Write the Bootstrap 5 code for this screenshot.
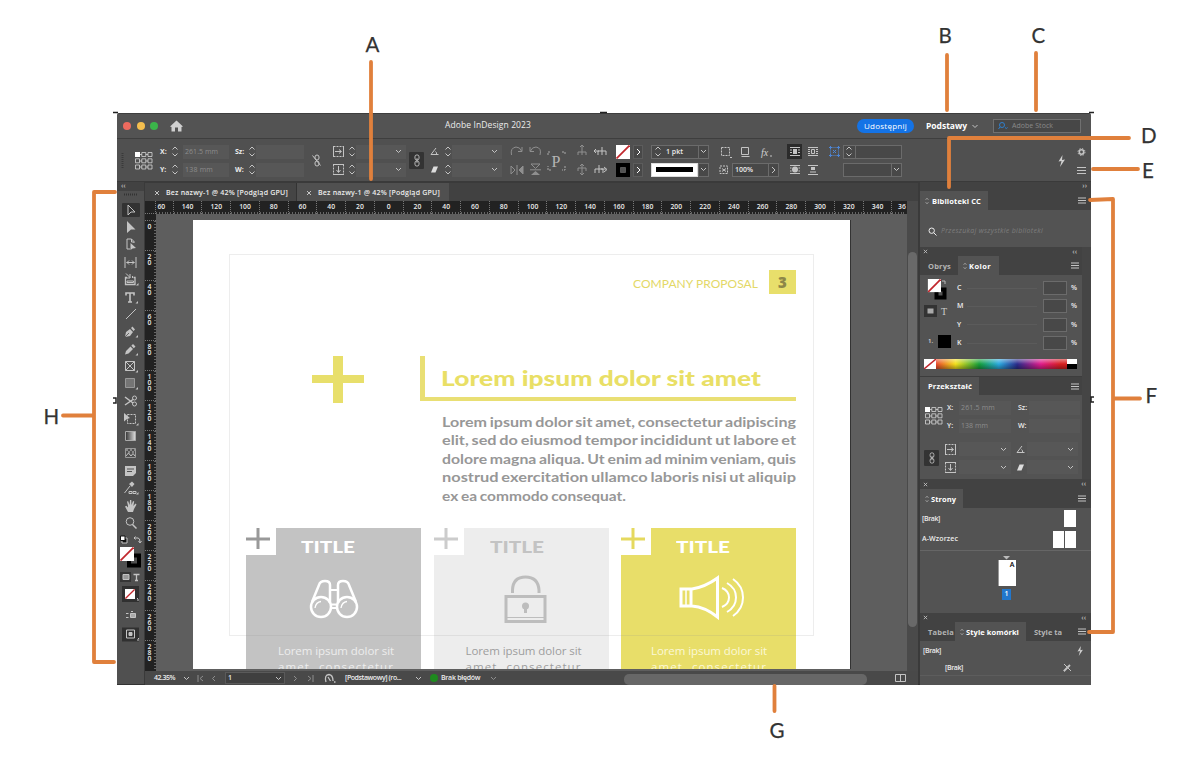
<!DOCTYPE html>
<html lang="pl">
<head>
<meta charset="utf-8">
<meta name="viewport" content="width=device-width, initial-scale=1">
<title>Adobe InDesign 2023</title>
<link href="https://cdn.jsdelivr.net/npm/bootstrap@5.3.0/dist/css/bootstrap.min.css" rel="stylesheet">
<style>
body{width:1200px;height:760px;overflow:hidden;background:#fff;position:relative;font-family:"Open Sans","Noto Sans",sans-serif}
svg{display:block;flex:none}
.ic{fill:none;stroke:#c4c4c4;stroke-width:1}
.ic .f{fill:#c4c4c4;stroke:none}
.dim{stroke:#8f8f8f}
.dim .f{fill:#8f8f8f}
.appwin{width:974px;height:572px;margin:113px 0 0 117px;background:#535353;color:#ececec;font-size:7px;line-height:10px;font-weight:600;border-top:1px solid #3e3e3e;border-radius:2px 2px 0 0;overflow:hidden;box-shadow:inset 0 -1px #333}
[data-w],[data-s]{display:inline-block;white-space:nowrap;flex:none;transform-origin:0 50%}
/* title bar */
.titlebar{display:grid;grid-template-columns:49px 279px 412px 69px 67px 98px;height:25px;align-items:center;border-bottom:1px solid #3e3e3e}
.dot{width:8px;height:8px;border-radius:50%}
.share{width:57px;height:14px;background:#1473e6;border-radius:7px;color:#fff;font-size:8px}
.stock{width:88px;height:14px;background:#474747;border:1px solid #707070;color:#8a8a8a;font-weight:400}
/* control strip */
.control{display:grid;grid-template-columns:18px 25px 75px 77px 21px 76px 21px 80px 37px 30px 39px 35px 68px 68px 42px 226px 21px 15px;height:43px;padding-top:1.5px;background:#505050;border-bottom:1px solid #3a3a3a;align-items:center}
.two{display:grid;grid-template-rows:14px 14px;row-gap:4px;align-items:center}
.fieldbox{background:#575757;height:14px;color:#8d8d8d;font-weight:400;display:flex;align-items:center;flex:none}
.linedbox{background:#484848;border:1px solid #6b6b6b;height:14px;display:flex;align-items:center;flex:none}
.darkbtn{background:#333;border-radius:1px;display:flex;align-items:center;justify-content:center;flex:none}
.lab{flex:none;color:#ececec;font-weight:700}
/* body */
.workarea{height:502px}
.tools{width:28px;background:#505050;border-right:1px solid #3a3a3a}
.striphead{height:9px;background:#424242;color:#bbb;line-height:8px}
.tool{height:17.39px;display:flex;align-items:center;justify-content:center}
.docarea{width:773px;background:#5e5e5e}
.tabstrip{height:19px;background:#414141;border-top:1px solid #3a3a3a}
.doctab{width:152px;padding:2px 0 0 9px;background:#454545;border-right:1px solid #333}
.doctab.current{background:#505050;border-right:0}
.hrule{height:13px;background:#222;overflow:hidden}
.hrule .cell{width:28.75px;flex:none;border-left:1px dotted #777;text-align:center;font-size:6.8px;line-height:12.5px;background:repeating-linear-gradient(90deg,#666 0 1px,transparent 1px 2.87px) 0 100%/100% 2px no-repeat}
.corner{width:11px;height:13px;flex:none;border-right:1px dotted #777;border-bottom:1px dotted #777}
.vrule{width:11px;background:#222;padding-top:6px;overflow:hidden;flex:none}
.vrule .cell{height:30px;border-top:1px dotted #777;padding:1px 3px 0 0;display:flex;justify-content:center;align-items:flex-start;font-size:6.8px;background:repeating-linear-gradient(#666 0 1px,transparent 1px 3px) 100% 0/2px 100% no-repeat}
.upright{writing-mode:vertical-rl;text-orientation:upright;line-height:8px;display:inline-block}
.pasteboard{width:751px;height:457px;padding:6px 0 0 37px;flex:none}
.sheet{width:657px;height:449px;background:#fff;box-shadow:1px 0 #333;position:relative;overflow:hidden}
.margins{position:absolute;left:36px;top:34px;width:585px;height:382px;border:1px solid rgba(140,140,140,.16)}
.vscroll{width:11px;background:#4a4a4a;padding:51px 1px 0}
.vscroll div{height:375px;border-radius:5px;background:#696969}
.company{font-family:Lato,sans-serif;font-weight:400;font-size:12px;line-height:27px;color:#e3d866}
.pageno{width:27px;height:24px;background:#e8df6b;color:#8d8748;font:800 15px/24px "Open Sans",sans-serif;text-align:center}
.headline{width:376px;height:45px;border-left:5px solid #e9df74;border-bottom:4px solid #e9df74;padding:11px 0 0 16px;color:#e9df66;font:900 20px/22px Lato,sans-serif}
.copytext{width:354px;height:92.25px;color:#979797;font:700 14px/18.45px Lato,"Open Sans",sans-serif;word-spacing:-1px}
.copytext span{display:block;width:max-content}
.feature{width:175px;height:141px;position:relative;text-align:center}
.feature h3{margin:0;padding:10px 0 0 55px;font:900 16.5px/18px Lato,sans-serif;text-align:left;height:47px}
.feature p{margin:0;font:400 11.5px/15.5px "Open Sans",sans-serif;padding:4px 0 0 32px;text-align:left}
.notch{position:absolute;left:0;top:0;width:30px;height:27px;background:#fff}
.status{height:14px;background:#494949;display:grid;grid-template-columns:9px 29px 14px 14px 14px 60px 14px 17px 21px 78px 15px 11px 45px 138px 271px 23px;align-items:center}
.hthumb{width:243px;height:11px;margin-top:2px;border-radius:5px;background:#676767}
/* panels */
.dock{width:173px;background:#454545;border-left:2px solid #3a3a3a}
.ptabs{height:19px;background:#424242;color:#b4b4b4;font-size:7.5px;font-weight:700;display:flex;align-items:center}
.ptabs .open{background:#535353;color:#fff;height:19px;display:flex;align-items:center;gap:2px}
.pbody{background:#535353}
.narrow{width:162px}
.cmyk{display:grid;grid-template-columns:10px 70px 6px 24px 12px;align-items:center;height:18.3px}
.cmyk hr{margin:0;border-color:#8a8a8a;opacity:.16}
.spectrum{width:131px;height:10px;background:linear-gradient(rgba(255,255,255,.45),transparent 50%,rgba(0,0,0,.35)),linear-gradient(90deg,#e8482c,#f3e11c 15%,#16a03a 33%,#2aaae0 48%,#2b2c8c 62%,#e01c8c 80%,#d82020 95%)}
.xf{display:grid;grid-template-columns:12px 52px 7px 11px 51px;align-items:center;height:14px}
.callouts{position:absolute;left:0;top:0;pointer-events:none}
.callouts text{font-family:Lato,"Open Sans",sans-serif;font-size:20.5px;fill:#333;stroke:#333;stroke-width:.25px}
</style>
</head>
<body>
<svg width="0" height="0" style="position:absolute">
  <symbol id="step" viewBox="0 0 7 13"><path d="M1 4.5L3.5 2L6 4.5M1 8.5L3.5 11L6 8.5"/></symbol>
  <symbol id="dn" viewBox="0 0 7 5"><path d="M1 1L3.5 3.5L6 1"/></symbol>
  <symbol id="rt" viewBox="0 0 5 8"><path d="M1 1L4 4L1 7"/></symbol>
  <symbol id="ham" viewBox="0 0 8 7"><path d="M0 1H8M0 3.5H8M0 6H8"/></symbol>
  <symbol id="exes" viewBox="0 0 6 6"><path d="M1 1L5 5M5 1L1 5"/></symbol>
  <symbol id="tiny" viewBox="0 0 4 8"><path d="M.5 3L2 1L3.5 3M.5 5L2 7L3.5 5"/></symbol>
  <symbol id="refp" viewBox="0 0 18 18"><path d="M.5 .5h4v4h-4zM6.800 .5h4v4h-4zM13 .5h4v4h-4zM.5 6.800h4v4h-4zM6.800 6.800h4v4h-4zM13 6.800h4v4h-4zM.5 13h4v4h-4zM6.800 13h4v4h-4zM13 13h4v4h-4zM4.500 2.500H6.800M10.800 2.500H13M4.500 9H6.800M10.800 9H13M4.500 15H6.800M10.800 15H13" stroke-width=".8"/><path d="M0 0h5v5H0z" fill="#fff" stroke="none"/></symbol>
  <symbol id="sx" viewBox="0 0 11 11"><path d="M.5 .5H10.500M.5 10.500H10.500"  stroke-dasharray="2 1"/><path d="M.5 0V11M10.500 0V11"/><path d="M2 5.500H8M6 3.500L8.500 5.500L6 7.500"/></symbol>
  <symbol id="sy" viewBox="0 0 11 11"><path d="M.5 .5V10.500M10.500 .5V10.500" stroke-dasharray="2 1"/><path d="M0 .5H11M0 10.500H11"/><path d="M5.500 2V8M3.500 6L5.500 8.500L7.500 6"/></symbol>
  <symbol id="ang" viewBox="0 0 9 9"><path d="M6 1L1 7.500H8.500M5.500 4.500Q7 5.500 6.500 7.500"/></symbol>
  <symbol id="shear" viewBox="0 0 9 9"><path d="M3.500 1.500H8L5.500 7.500H1z" fill="#ddd" stroke="none"/></symbol>
  <symbol id="chain" viewBox="0 0 8 14"><rect x="1.800" y="1" width="4.400" height="5.500" rx="2"/><rect x="1.800" y="7.500" width="4.400" height="5.500" rx="2"/><path d="M4 4.500V9.500"/></symbol>
  <symbol id="bolt" viewBox="0 0 8 12"><path d="M5 0L1 6.500L4 6L2.500 12L7.500 4.500L4.500 5z" fill="#d0d0d0" stroke="none"/></symbol>
  <symbol id="none" viewBox="0 0 14 14"><path d="M0 0h14v14H0z" fill="#fff" stroke="none"/><path d="M.5 13.500L13.500 .5" stroke="#c1272d" stroke-width="1.800"/></symbol>
  <symbol id="lens" viewBox="0 0 9 9"><circle cx="3.700" cy="3.700" r="2.700"/><path d="M5.700 5.700L8.500 8.500"/></symbol>
</svg>

<main class="appwin">
  <header class="titlebar">
    <div class="d-flex" style="gap:5.500px;padding-left:6px"><i class="dot" style="background:#ec6a5e"></i><i class="dot" style="background:#f4be4e"></i><i class="dot" style="background:#3bb54a"></i></div>
    <div class="d-flex"><svg class="ms-1" width="13" height="12" viewBox="0 0 13 12"><path d="M6.500 .5L0 6.500L1.500 7V11.500H5V7.500H8V11.500H11.500V7L13 6.500z" fill="#cfcfcf"/></svg></div>
    <div><span data-w="86" style="font-size:8.500px;font-weight:400;position:relative;top:-1px">Adobe InDesign 2023</span></div>
    <div class="d-flex"><div class="share d-flex align-items-center justify-content-center fw-normal"><span data-w="43">Udostępnij</span></div></div>
    <div class="d-flex align-items-center"><span data-w="41" class="fw-bold text-white" style="font-size:8.500px">Podstawy</span><svg class="ic ms-1" width="8" height="5"><use href="#dn"/></svg></div>
    <div class="stock d-flex align-items-center ps-1"><svg class="ic me-1" style="stroke:#2f80d0" width="10" height="8" viewBox="0 0 10 8"><circle cx="4" cy="3" r="2.500"/><path d="M2 5L.5 7M7 5.500l1.300 1L9.600 5.500"/></svg><span data-w="41">Adobe Stock</span></div>
  </header>

  <section class="control">
    <svg width="6" height="16" class="ms-1"><path d="M1.500 0V16" stroke="#3a3a3a" stroke-width="2" stroke-dasharray="1 1"/></svg>
    <svg class="ic" style="stroke:#d5d5d5" width="18" height="18"><use href="#refp"/></svg>
    <div class="two">
      <div class="d-flex align-items-center"><span class="lab" style="width:11px">X:</span><svg class="ic" width="8" height="13"><use href="#step"/></svg><div class="fieldbox ms-1" style="width:46px;padding-left:2px"><span data-w="33">261.5 mm</span></div></div>
      <div class="d-flex align-items-center"><span class="lab" style="width:11px">Y:</span><svg class="ic" width="8" height="13"><use href="#step"/></svg><div class="fieldbox ms-1" style="width:46px;padding-left:2px"><span data-w="28">138 mm</span></div></div>
    </div>
    <div class="two">
      <div class="d-flex align-items-center"><span class="lab" style="width:13px">Sz:</span><svg class="ic" width="8" height="13"><use href="#step"/></svg><div class="fieldbox" style="width:48px"></div></div>
      <div class="d-flex align-items-center"><span class="lab" style="width:13px">W:</span><svg class="ic" width="8" height="13"><use href="#step"/></svg><div class="fieldbox" style="width:48px"></div></div>
    </div>
    <svg class="ic" width="9" height="13" viewBox="0 0 9 13"><rect x="3" y="1" width="4" height="5" rx="2"/><rect x="3" y="7" width="4" height="5" rx="2"/><path d="M.5 1.500L8.500 11.500"/></svg>
    <div class="two">
      <div class="d-flex align-items-center"><svg class="ic" width="11" height="11"><use href="#sx"/></svg><svg class="ic ms-1" width="8" height="13"><use href="#step"/></svg><div class="fieldbox justify-content-end pe-1" style="width:50px"><svg class="ic" width="7" height="5"><use href="#dn"/></svg></div></div>
      <div class="d-flex align-items-center"><svg class="ic" width="11" height="11"><use href="#sy"/></svg><svg class="ic ms-1" width="8" height="13"><use href="#step"/></svg><div class="fieldbox justify-content-end pe-1" style="width:50px"><svg class="ic" width="7" height="5"><use href="#dn"/></svg></div></div>
    </div>
    <div class="darkbtn" style="width:15px;height:17px"><svg class="ic" width="8" height="13"><use href="#chain"/></svg></div>
    <div class="two">
      <div class="d-flex align-items-center"><svg class="ic" width="9" height="9"><use href="#ang"/></svg><svg class="ic" style="margin-left:5px" width="8" height="13"><use href="#step"/></svg><div class="fieldbox justify-content-end pe-1" style="width:50px"><svg class="ic" width="7" height="5"><use href="#dn"/></svg></div></div>
      <div class="d-flex align-items-center"><svg class="ic" width="9" height="9"><use href="#shear"/></svg><svg class="ic" style="margin-left:5px" width="8" height="13"><use href="#step"/></svg><div class="fieldbox justify-content-end pe-1" style="width:50px"><svg class="ic" width="7" height="5"><use href="#dn"/></svg></div></div>
    </div>
    <svg class="ic dim" width="33" height="34" viewBox="0 0 33 34"><path d="M1.500 11Q0 4 6 3Q10 3 11.500 7M12 3V7.500H8M30 11Q32 4 26 3Q22 3 20.500 7M20 3V7.500H24"/><path d="M1 22L5 26L1 30zM7 21V31M13 22L9 26L13 30zM21 20H30L25.500 24.500z"/><path class="f" d="M21 31H30L25.500 27zM13 22L9 26L13 30z"/><path d="M20 25.800H31"/></svg>
    <svg class="ic" style="stroke:#a8a8a8" width="19" height="20" viewBox="0 0 19 20"><path d="M1 4V1H4M15 1H18V4M18 15V19H15M4 19H1V15" stroke-dasharray="2 1"/><text x="4.500" y="16" font-family="Liberation Serif" font-size="16" font-weight="400" fill="#b5b5b5" stroke="none">P</text></svg>
    <svg class="ic dim" width="32" height="34" viewBox="0 0 32 34"><path d="M5 1V8M3 3L5 1L7 3M1 11V8H9V11M5 8V11M5 20V31M3 22L5 20L7 22M1 27V24H9V27M3 29L5 31L7 29"/><g stroke="#c4c4c4"><path d="M17 7H22M19 5L17 7L19 9M21 11V7H29V11M25 3V11M29 25H24M18 29V25H26V29M22 21V29M27 23L30 25.500L27 28"/></g></svg>
    <div class="two">
      <div class="d-flex align-items-center"><svg width="14" height="14"><use href="#none"/></svg><div class="linedbox justify-content-center" style="width:10px;margin-left:3px;border-color:#5c5c5c"><svg class="ic" style="stroke:#fff" width="5" height="8"><use href="#rt"/></svg></div></div>
      <div class="d-flex align-items-center"><svg width="14" height="14"><path d="M0 0h14v14H0z"/><path d="M4.500 4.500h5v5h-5z" fill="#535353" stroke="#777" stroke-width=".6"/></svg><div class="linedbox justify-content-center" style="width:10px;margin-left:3px;border-color:#5c5c5c"><svg class="ic" style="stroke:#fff" width="5" height="8"><use href="#rt"/></svg></div></div>
    </div>
    <div class="two">
      <div class="d-flex"><div class="linedbox" style="width:48px"><svg class="ic" style="margin:0 4px 0 2px" width="8" height="13"><use href="#step"/></svg><span data-w="17">1 pkt</span></div><div class="linedbox justify-content-center" style="width:11px;margin-left:-1px"><svg class="ic" width="7" height="5"><use href="#dn"/></svg></div></div>
      <div class="d-flex"><div class="linedbox bg-white justify-content-center" style="width:47px;border-color:#ddd"><div class="bg-black" style="width:37px;height:5px"></div></div><div class="linedbox justify-content-center" style="width:11px"><svg class="ic" width="7" height="5"><use href="#dn"/></svg></div></div>
    </div>
    <div class="two">
      <svg class="ic" width="58" height="14" viewBox="0 0 58 14"><path d="M2.500 2.500h8v8h-8z" stroke-dasharray="2 1"/><path d="M11 12.500h2"/><path d="M22.500 2.500h7v7h-7zM22.500 11.500h8"/><text x="42" y="11" font-size="10" font-weight="400" font-style="italic" font-family="Liberation Serif" fill="#d0d0d0" stroke="none">fx</text><path d="M51 11h2"/></svg>
      <div class="d-flex align-items-center"><svg class="ic" width="10" height="10" viewBox="0 0 10 10"><path d="M1 1h7.500v7.500H1z" stroke-dasharray="2 1"/><path d="M3 3.500l2 1.500-2 1.500M7 3.500L5 5l2 1.500"/></svg><div class="linedbox" style="width:37px;margin-left:3px;padding-left:2px"><span data-w="18">100%</span></div><div class="linedbox justify-content-center" style="width:11px;margin-left:-1px"><svg class="ic" width="5" height="8"><use href="#rt"/></svg></div></div>
    </div>
    <svg width="32" height="34" class="ic" viewBox="0 0 32 34"><path d="M0 0h15v15H0z" fill="#2b2b2b" stroke="none"/><path d="M3 3.500h10M3 6h2M11 6h2M3 8.500h2M11 8.500h2M3 11.500h10M21 3.500h10M21 11.500h10M21 5.500h2M21 7.500h2M21 9.500h2M29 5.500h2M29 7.500h2M29 9.500h2M3 21.500h10M3 29.500h10M3 24h1.500M3 27h1.500M11.500 24H13M11.500 27H13M21 21.500h10M21 30.500h10M23 28h6"/><path class="f" d="M6 5h4v5H6zM24 23h4v3h-4z"/><path d="M24.500 5.500h3v4h-3z"/><circle class="f" cx="8" cy="25.500" r="3"/></svg>
    <div class="two">
      <div class="d-flex align-items-center"><svg width="11" height="11" viewBox="0 0 11 11" fill="none" stroke="#4d86d6"><path d="M1.500 1.500h8v8h-8z" stroke-dasharray="1 1"/><path d="M0 1.500h3M8 1.500h3M0 9.500h3M8 9.500h3M1.500 0v3M9.500 0v3M1.500 8v3M9.500 8v3M4 4l3 3M7 4L4 7"/></svg><div class="linedbox" style="width:59px;margin-left:3px"><svg class="ic" style="margin-left:1px" width="8" height="13"><use href="#step"/></svg><span style="width:1px;height:12px;background:#6b6b6b;margin-left:2px"></span></div></div>
      <div class="d-flex align-items-center" style="padding-left:14px"><div class="linedbox" style="width:49px"></div><div class="linedbox justify-content-center" style="width:11px;margin-left:-1px"><svg class="ic" width="7" height="5"><use href="#dn"/></svg></div></div>
    </div>
    <svg width="13" height="12"><use href="#bolt"/></svg>
    <svg class="ic" width="11" height="34" viewBox="0 0 11 34"><circle cx="5.500" cy="8" r="2.200" stroke-width="1.600"/><circle cx="5.500" cy="8" r="3.500" stroke-dasharray="1.400 1.350"/><path d="M1 23.500h9M1 26.500h9M1 29.500h9"/></svg>
  </section>

  <div class="workarea d-flex">
    <nav class="tools">
      <div class="striphead ps-1">‹‹</div>
      <svg width="28" height="8"><path d="M7 3.500H20" stroke="#333" stroke-width="2" stroke-dasharray="1 1"/></svg>
      <div style="margin-top:2.500px">
        <div class="tool"><div class="darkbtn" style="width:18px;height:14px"><svg class="ic" width="12" height="12" viewBox="0 0 12 12"><path d="M3 1V11L6 8L10 8z"/></svg></div></div>
        <div class="tool"><svg class="ic" width="12" height="13" viewBox="0 0 12 13"><path class="f" d="M2 0V12L6 8.500L10.500 8.500z"/></svg></div>
        <div class="tool"><svg class="ic" width="12" height="13" viewBox="0 0 12 13"><path d="M2 1H6.500L9 3.500V5M2 1V11H5M6.500 1V4H9"/><path class="f" d="M5.500 5V12L7.500 10.500L11 10z"/></svg></div>
        <div class="tool"><svg class="ic" width="13" height="11" viewBox="0 0 13 11"><path d="M1 0V11M12 0V11M2.500 5.500H10.500M5 3.500L3 5.500L5 7.500M8 3.500L10 5.500L8 7.500"/></svg></div>
        <div class="tool"><svg class="ic" width="16" height="13" viewBox="0 0 16 13"><path d="M4 4.500H2.500V11.500H12V4.500H10.500" stroke-width="1.300"/><path d="M4 8H10.500V9.500H4z"/><path d="M3 0.500L7 4.500M7 1V5H3M9.500 3V5"/><path class="f" d="M13 12.500h2.500v-2.500z"/></svg></div>
        <div class="tool"><svg class="ic" width="16" height="13" viewBox="0 0 16 13"><path d="M3 4.500V2H11V4.500M7 2V11M5 11H9" stroke-width="1.600"/><path class="f" d="M12.500 12.500h2.500v-2.500z"/></svg></div>
        <div class="tool"><svg class="ic" width="12" height="12" viewBox="0 0 12 12"><path d="M1 11L11 1"/></svg></div>
        <div class="tool"><svg class="ic" width="16" height="13" viewBox="0 0 16 13"><path class="f" d="M2 12L3 7L7 4L10 7L7 11zM8 3L9.500 1.500L12 4.500L10.500 6z"/><path d="M2 12L6 8" stroke="#505050" stroke-width=".8"/><path class="f" d="M12.500 12.500h2.500v-2.500z"/></svg></div>
        <div class="tool"><svg class="ic" width="16" height="13" viewBox="0 0 16 13"><path class="f" d="M2 11.500L3 8L7.500 3.500L10 6L5.500 10.500zM8.300 2.700L10 1L12.500 3.500L10.800 5.200z"/><path class="f" d="M12.500 12.500h2.500v-2.500z"/></svg></div>
        <div class="tool"><svg class="ic" width="16" height="13" viewBox="0 0 16 13"><path d="M2.500 1.500h9v9h-9zL11.500 10.500M11.500 1.500L2.500 10.500"/><path class="f" d="M12.500 12.500h2.500v-2.500z"/></svg></div>
        <div class="tool"><svg class="ic" width="16" height="13" viewBox="0 0 16 13"><path d="M2.500 1.500h9v9h-9z" fill="#757575" stroke="#999"/><path class="f" d="M12.500 12.500h2.500v-2.500z"/></svg></div>
        <div class="tool"><svg class="ic" width="14" height="12" viewBox="0 0 14 12"><path d="M1 2L9 8M1 10L9 4.500" stroke-width="1.500"/><circle cx="10.500" cy="3" r="2"/><circle cx="10.500" cy="9" r="2"/></svg></div>
        <div class="tool"><svg class="ic" width="16" height="14" viewBox="0 0 16 14"><path d="M4.500 2.500h8v9h-8z" stroke-dasharray="2 1"/><path class="f" d="M1 1V9.500L4 7L7 6zM13 13.500h2.500v-2.500z"/></svg></div>
        <div class="tool"><svg width="11" height="10"><defs><linearGradient id="gr"><stop stop-color="#333"/><stop offset="1" stop-color="#e0e0e0"/></linearGradient></defs><path d="M.5 .5h10v9H.5z" fill="url(#gr)" stroke="#aaa"/></svg></div>
        <div class="tool"><svg class="ic" width="11" height="10" viewBox="0 0 11 10"><path d="M.5 .5h10v9H.5z" stroke="#999"/><path d="M1 2h9M3 4h7" stroke-dasharray="2 2"/><path d="M1 8L3.500 5L6 8L8 5.500L10 8"/></svg></div>
        <div class="tool"><svg class="ic" width="11" height="10" viewBox="0 0 11 10"><path class="f" d="M0 0H11V7L8 10H0z"/><path d="M2 3H9M2 5.500H7" stroke="#505050"/></svg></div>
        <div class="tool"><svg class="ic" width="16" height="14" viewBox="0 0 16 14"><path d="M1.500 12L7 5"/><path class="f" d="M6 3L9 0.500L11.500 3L9 6zM13 13.500h2.500v-2.500z"/><path d="M6 10.500h3v2H6zM10 10.500h3v2h-3z"/></svg></div>
        <div class="tool"><svg class="ic" width="12" height="12" viewBox="0 0 12 12"><path class="f" d="M3 12L0 6.500L1.500 5.800L3 7.500V6L2 1.500L3.200 1.200L4.600 5L5 0H6.300L6.500 5L8 1L9.200 1.500L8.300 6L10.500 3.500L11.500 4.500L9 9L8 12z"/></svg></div>
        <div class="tool"><svg class="ic" width="12" height="12" viewBox="0 0 12 12"><circle cx="5" cy="4.500" r="3.800"/><path d="M7.500 7.500L11.500 11.500" stroke-width="1.500"/></svg></div>
      </div>
      <svg width="28" height="120" viewBox="0 0 28 120" fill="none" stroke="#c4c4c4">
        <path d="M5 6h5v5H5z" fill="#111"/><path d="M3.500 4h4.500v4.500H3.500z" fill="#fff" stroke="#111"/><path d="M17 6h4q2 0 2 4M18.500 4.500L17 6l1.500 1.500M21.500 9l1.500 2 1.500-2"/>
        <path d="M12 23.500h10v10H12z" stroke="#000" stroke-width="4"/><svg x="3" y="15" width="14" height="14"><use href="#none"/></svg>
        <path d="M3 40h11v10H3z" fill="#363636" stroke="none"/><path d="M6 42.500h6v5H6z" fill="#999"/><path d="M16.500 42.500h6M19.500 42.500v6M18 48.500h3" stroke-width="1.300"/>
        <path d="M5 54h17v16H5z" fill="#303030" stroke="none"/><svg x="8" y="57" width="10" height="10"><use href="#none"/></svg><path d="M20 68h2M20 67l1-1"/>
        <path d="M9 81.500h2.500M9 85.500h2.500M14 79.500h2"/><path d="M13.500 81.500h5v4h-5z" fill="#aaa"/>
        <path d="M5 95.500h17v14H5z" fill="#303030" stroke="none"/><path d="M9.500 98h8v8h-8z"/><path d="M12 100.500h3v3h-3z" fill="#c4c4c4"/><path d="M20 108h2M21 107l1-1"/>
      </svg>
    </nav>

    <section class="docarea">
      <div class="tabstrip d-flex">
        <div class="doctab d-flex align-items-center"><svg class="ic me-1" width="6" height="6"><use href="#exes"/></svg><span style="margin-left:2px" data-w="122">Bez nazwy-1 @ 42% [Podgląd GPU]</span></div>
        <div class="doctab current d-flex align-items-center"><svg class="ic me-1" width="6" height="6"><use href="#exes"/></svg><span style="margin-left:2px" data-w="122">Bez nazwy-1 @ 42% [Podgląd GPU]</span></div>
      </div>
      <div class="d-flex">
        <div style="width:762px">
          <div class="hrule d-flex" id="hr"><div class="corner"></div></div>
          <div class="d-flex" style="height:457px">
            <div class="vrule" id="vr"></div>
            <div class="pasteboard">
              <div class="sheet">
                <div class="d-flex justify-content-end" style="padding:50px 54px 0 0;gap:11px"><span class="company" data-w="125">COMPANY PROPOSAL</span><div class="pageno">3</div></div>
                <div class="d-flex" style="height:109px;padding:59px 0 0 119px">
                  <svg width="52" height="47"><path d="M0 19h52v8H0zM21 0h10v47H21z" fill="#e8df6b"/></svg>
                  <div class="headline" style="margin-left:56px"><span data-s="320">Lorem ipsum dolor sit amet</span></div>
                </div>
                <div class="copytext" style="margin:7px 0 0 249px">
                  <span data-s="354">Lorem ipsum dolor sit amet, consectetur adipiscing</span>
                  <span data-s="354">elit, sed do eiusmod tempor incididunt ut labore et</span>
                  <span data-s="354">dolore magna aliqua. Ut enim ad minim veniam, quis</span>
                  <span data-s="354">nostrud exercitation ullamco laboris nisi ut aliquip</span>
                  <span data-s="184">ex ea commodo consequat.</span>
                </div>
                <div class="d-flex" style="margin:22.750px 0 0 53px;gap:12.500px">
                  <div class="feature" style="background:#c3c3c3;color:#ededed">
                    <div class="notch"><svg width="24" height="22"><path d="M0 11h24M12 0v21" stroke="#999" stroke-width="3"/></svg></div>
                    <h3 class="text-white"><span data-s="54">TITLE</span></h3>
                    <svg style="margin:4px 0 20px 63px" width="50" height="40" viewBox="0 0 50 40" fill="none" stroke="#fff" stroke-width="2.500"><circle cx="12" cy="28" r="10"/><circle cx="38" cy="28" r="10"/><path d="M3 23L10 6Q11 2 16 2Q21 2 21 6V24M47 23L40 6Q39 2 34 2Q29 2 29 6V24"/><path d="M21 11H29M21 25.500H29M21 29H29" stroke-width="2"/><path d="M6 29Q7 23 12 22.500M32 29Q33 23 38 22.500" stroke-width="1.300"/></svg>
                    <p><span data-w="116">Lorem ipsum dolor sit</span><br><span data-w="116" style="word-spacing:5px">amet consectetur</span></p>
                  </div>
                  <div class="feature" style="background:#ededed;color:#9d9d9d">
                    <div class="notch"><svg width="24" height="22"><path d="M0 11h24M12 0v21" stroke="#ccc" stroke-width="3"/></svg></div>
                    <h3 style="color:#c3c3c3;padding-left:56px"><span data-s="54">TITLE</span></h3>
                    <svg style="margin:0 0 16px 70px" width="43" height="48" viewBox="0 0 43 48" fill="none" stroke="#bdbdbd" stroke-width="3"><path d="M2 21.500H41V46.500H2z"/><path d="M8.500 18V15Q9 2 21.500 2Q34 2 35 15V18"/><path d="M3 42.500H40" stroke-width="1"/><circle cx="21.500" cy="31" r="3.500" fill="#bdbdbd" stroke="none"/><path d="M21.500 31V38"/></svg>
                    <p><span data-w="116">Lorem ipsum dolor sit</span><br><span data-w="116" style="word-spacing:5px">amet consectetur</span></p>
                  </div>
                  <div class="feature" style="background:#e8de69;color:#fbf8d8">
                    <div class="notch"><svg width="24" height="22"><path d="M0 11h24M12 0v21" stroke="#e5d95f" stroke-width="3"/></svg></div>
                    <h3 class="text-white"><span data-s="54">TITLE</span></h3>
                    <svg style="margin:0 0 19px 58px" width="66" height="45" viewBox="0 0 66 45" fill="none" stroke="#fff" stroke-width="3"><path d="M2 14H13Q26 12 38.500 3V42Q26 32 13 31H2zM12 14V31"/><path d="M7 14V31" stroke-width="1.500"/><path d="M43 13Q50 16 50 22.500Q50 29 43 32M48 8Q57 13 57 22.500Q57 32 48 37M54 4Q64 11 64 22.500Q64 34 54 41" stroke-width="2"/></svg>
                    <p style="padding-left:30px"><span data-w="116">Lorem ipsum dolor sit</span><br><span data-w="116" style="word-spacing:5px">amet consectetur</span></p>
                  </div>
                </div>
                <div class="margins"></div>
              </div>
            </div>
          </div>
        </div>
        <div class="vscroll"><div></div></div>
      </div>
      <footer class="status">
        <span></span><span data-w="26">42.35%</span>
        <svg class="ic" width="7" height="5"><use href="#dn"/></svg>
        <svg class="ic dim" width="7" height="7" viewBox="0 0 7 7"><path d="M1 0V7M6 1L3 3.500L6 6"/></svg>
        <svg class="ic dim" width="6" height="7" viewBox="0 0 6 7"><path d="M4 1L1.500 3.500L4 6"/></svg>
        <div class="linedbox justify-content-between" style="height:12px;padding:0 2px;background:#3f3f3f;border-color:#5a5a5a"><span>1</span><svg class="ic" width="7" height="5"><use href="#dn"/></svg></div>
        <svg class="ic dim ms-2" width="5" height="7" viewBox="0 0 5 7"><path d="M1 1L3.500 3.500L1 6"/></svg>
        <svg class="ic dim ms-2" width="7" height="7" viewBox="0 0 7 7"><path d="M6 0V7M1 1L4 3.500L1 6"/></svg>
        <svg class="ic ms-2" width="12" height="10" viewBox="0 0 12 10"><path d="M2 9Q0 2 5 1.500Q9 2 9 8M4 4L6.500 8M10 9h1.500" stroke-width="1.300"/></svg>
        <span class="ms-2" data-w="62">[Podstawowy] (ro...</span>
        <svg class="ic" width="7" height="5"><use href="#dn"/></svg>
        <i class="dot" style="background:#1e8a1e"></i>
        <span data-w="42">Brak błędów</span>
        <svg class="ic dim ms-1" width="7" height="5"><use href="#dn"/></svg>
        <div class="hthumb"></div>
        <svg class="ic" width="11" height="8" viewBox="0 0 11 8"><path d="M.5 .5h10v7H.5zM5.500 .5v7"/></svg>
      </footer>
    </section>

    <aside class="dock">
      <div class="striphead text-end pe-1">››</div>
      <div class="ptabs"><div class="open" style="width:68px;padding-left:5px"><svg class="ic dim" width="4" height="8"><use href="#tiny"/></svg><span data-w="49" style="margin-left:1px">Biblioteki CC</span></div><svg class="ic ms-auto" style="margin-right:5px" width="8" height="7"><use href="#ham"/></svg></div>
      <div class="pbody d-flex align-items-center" style="height:37px;padding:5px 0 0 8px"><svg class="ic" style="stroke:#eee" width="9" height="9"><use href="#lens"/></svg><span class="fst-italic fw-normal ms-1" style="color:#7d7d7d" data-w="102">Przeszukaj wszystkie biblioteki</span></div>

      <div class="narrow">
        <div class="striphead d-flex justify-content-between align-items-center" style="padding:0 5px 0 3px"><svg class="ic" width="5" height="5"><use href="#exes"/></svg><span>‹‹</span></div>
        <div class="ptabs"><span data-w="23" style="margin-left:8px;margin-right:7px">Obrys</span><div class="open" style="width:41px;padding-left:5px"><svg class="ic dim" width="4" height="8"><use href="#tiny"/></svg><span data-w="22">Kolor</span></div><svg class="ic ms-auto" style="margin-right:3px" width="8" height="7"><use href="#ham"/></svg></div>
        <div class="pbody" style="height:101px;padding:4px 0 0 4px">
          <div class="d-flex">
            <svg width="33" height="74" viewBox="0 0 33 74"><path d="M12.500 10.500h8v8h-8z" fill="none" stroke="#000" stroke-width="4"/><svg x="3.500" y="0" width="13.500" height="13.500"><use href="#none"/></svg><path d="M18 2h3v3" fill="none" stroke="#bbb"/><rect y="26" width="13" height="12" fill="#333"/><path d="M3.500 29.500h6v5h-6z" fill="#aaa"/><text x="17" y="36" font-family="Liberation Serif" font-size="10" font-weight="400" fill="#ccc">T</text><text x="4" y="64" font-size="6" fill="#ddd">1.</text><path d="M14 56h13v13H14z"/></svg>
            <div>
              <div class="cmyk"><span>C</span><hr><span></span><span class="linedbox"></span><span class="ps-1">%</span></div>
              <div class="cmyk"><span>M</span><hr><span></span><span class="linedbox"></span><span class="ps-1">%</span></div>
              <div class="cmyk"><span>Y</span><hr><span></span><span class="linedbox"></span><span class="ps-1">%</span></div>
              <div class="cmyk"><span>K</span><hr><span></span><span class="linedbox"></span><span class="ps-1">%</span></div>
            </div>
          </div>
          <div class="d-flex" style="margin-top:6px"><svg width="12" height="10" viewBox="0 0 12 10"><path d="M0 0h12v10H0z" fill="#fff"/><path d="M0 10L12 0" stroke="#c1272d" stroke-width="1.500"/></svg><div class="spectrum"></div><div style="width:10px"><div class="bg-white" style="height:5px"></div><div class="bg-black" style="height:5px"></div></div></div>
        </div>
        <div class="ptabs" style="border-top:1px solid #3d3d3d"><div class="open" style="width:59px;padding-left:8px"><span data-w="44">Przekształć</span></div><svg class="ic ms-auto" style="margin-right:3px" width="8" height="7"><use href="#ham"/></svg></div>
        <div class="pbody" style="height:84px;padding:6px 0 0 4px">
          <div class="d-flex">
            <svg class="ic" style="margin:6px 4px 0 1px;stroke:#d5d5d5" width="18" height="18"><use href="#refp"/></svg>
            <div class="d-grid" style="gap:4px">
              <div class="xf"><span>X:</span><div class="fieldbox" style="padding-left:2px"><span data-w="34">261.5 mm</span></div><span></span><span>Sz:</span><div class="fieldbox"></div></div>
              <div class="xf"><span>Y:</span><div class="fieldbox" style="padding-left:2px"><span data-w="27">138 mm</span></div><span></span><span>W:</span><div class="fieldbox"></div></div>
            </div>
          </div>
          <div class="d-flex align-items-center" style="margin-top:9px">
            <div class="darkbtn" style="width:15px;height:16px;margin-right:6px"><svg class="ic" width="8" height="12"><use href="#chain"/></svg></div>
            <div class="d-grid" style="gap:4px">
              <div class="xf" style="grid-template-columns:14px 52px 5px 11px 51px"><svg class="ic" width="11" height="11"><use href="#sx"/></svg><div class="fieldbox justify-content-end pe-1"><svg class="ic" width="7" height="5"><use href="#dn"/></svg></div><span></span><svg class="ic" width="9" height="9"><use href="#ang"/></svg><div class="fieldbox justify-content-end pe-1"><svg class="ic" width="7" height="5"><use href="#dn"/></svg></div></div>
              <div class="xf" style="grid-template-columns:14px 52px 5px 11px 51px"><svg class="ic" width="11" height="11"><use href="#sy"/></svg><div class="fieldbox justify-content-end pe-1"><svg class="ic" width="7" height="5"><use href="#dn"/></svg></div><span></span><svg class="ic" width="9" height="9"><use href="#shear"/></svg><div class="fieldbox justify-content-end pe-1"><svg class="ic" width="7" height="5"><use href="#dn"/></svg></div></div>
            </div>
          </div>
        </div>
      </div>

      <div class="striphead d-flex justify-content-between align-items-center" style="height:10px;padding:0 5px 0 3px"><svg class="ic" width="5" height="5"><use href="#exes"/></svg><span>‹‹</span></div>
      <div class="ptabs"><div class="open" style="width:43px;padding-left:5px"><svg class="ic dim" width="4" height="8"><use href="#tiny"/></svg><span data-w="25">Strony</span></div><svg class="ic ms-auto" style="margin-right:5px" width="8" height="7"><use href="#ham"/></svg></div>
      <div class="pbody" style="height:105px;padding:1px 0 0 2px">
        <div class="d-flex justify-content-between align-items-center" style="height:19px;padding-right:15px"><span data-w="18">[Brak]</span><div class="bg-white" style="width:12px;height:17px"></div></div>
        <div class="d-flex justify-content-between align-items-center" style="height:22px;padding-right:15px"><span data-w="36">A-Wzorzec</span><div class="d-flex" style="gap:1px"><div class="bg-white" style="width:11px;height:17px"></div><div class="bg-white" style="width:11px;height:17px"></div></div></div>
        <div style="border-top:1px solid #666;margin-left:-2px"></div>
        <div class="d-flex flex-column align-items-center" style="width:169px">
          <svg style="margin-top:5px" width="18" height="4"><path d="M5 0h7L8.500 3.500z" fill="#bbb"/></svg>
          <div class="bg-white text-black text-end" style="width:18px;height:26px;padding-right:1px;border-left:1px solid #999">A</div>
          <div class="text-white text-center" style="width:9px;height:11px;margin-top:3px;background:#2277cc">1</div>
        </div>
      </div>
      <div class="striphead d-flex justify-content-between align-items-center" style="padding:0 5px 0 3px"><svg class="ic" width="5" height="5"><use href="#exes"/></svg><span>‹‹</span></div>
      <div class="ptabs"><span data-w="26" style="margin-left:8px">Tabela</span><div class="open" style="width:71px;padding-left:5px;margin-left:1px"><svg class="ic dim" width="4" height="8"><use href="#tiny"/></svg><span data-w="53">Style komórki</span></div><span data-w="28" style="margin-left:8px">Style ta</span><svg class="ic ms-auto" style="margin-right:5px" width="8" height="7"><use href="#ham"/></svg></div>
      <div class="pbody" style="height:44px;padding-top:1px">
        <div class="d-flex justify-content-between align-items-center" style="height:18px;padding:0 7px 0 3px"><span data-w="18">[Brak]</span><svg width="8" height="10"><use href="#bolt"/></svg></div>
        <div class="d-flex justify-content-between align-items-center" style="height:16px;padding:0 19px 0 25px;border-bottom:1px solid #5d5d5d"><span data-w="18">[Brak]</span><svg class="ic" width="9" height="9" viewBox="0 0 9 9"><path d="M1 8L7 2" stroke-width="1.800"/><path d="M1 1L8 8M2 8H1V7"/></svg></div>
      </div>
    </aside>
  </div>
</main>

<!-- lettered callouts laid over the window -->
<svg class="callouts" width="1200" height="760">
  <g fill="none" stroke="#e0803c" stroke-width="3.800" stroke-linecap="round" stroke-linejoin="round">
    <path d="M371 62V179M947 55V110M1036 53V110M1129 138H949V187M1093 169H1138M774.500 686V711"/>
    <path d="M1090 200L1113 199V632H1089M1113 398.500H1140"/>
    <path d="M115 192H94V662H114M94 415.500H63"/>
  </g>
  <path d="M113 112.500h5M600 112.500h7M1089 112.500h5M113 398h3v5h-3M1094 397h-3v5h3" fill="none" stroke="#222" stroke-width="1.500"/>
  <text x="365.500" y="52">A</text><text x="938.500" y="42.500">B</text><text x="1031.500" y="42.500">C</text><text x="1141" y="143">D</text><text x="1142" y="177.500">E</text><text x="1145.500" y="402.500">F</text><text x="769.500" y="737.500">G</text><text x="43.500" y="424">H</text>
</svg>

<script src="https://cdn.jsdelivr.net/npm/bootstrap@5.3.0/dist/js/bootstrap.bundle.min.js"></script>
<script>
// ruler labels
const hr = document.getElementById('hr'), vr = document.getElementById('vr');
[60,140,120,100,80,60,40,20,0,20,40,60,80,100,120,140,160,180,200,220,240,260,280,300,320,340,36].forEach((n, i, all) => {
  const c = document.createElement('div');
  c.className = 'cell';
  c.textContent = n;
  if (i === 0) { c.style.width = '16.6px'; c.style.borderLeft = '0'; c.style.paddingRight = '6px'; }
  if (i === all.length - 1) { c.style.width = '14.5px'; c.style.textAlign = 'right'; }
  hr.appendChild(c);
});
for (let n = 0; n <= 280; n += 20) {
  const c = document.createElement('div');
  c.className = 'cell';
  const s = document.createElement('span');
  s.className = 'upright';
  s.textContent = n;
  c.appendChild(s);
  vr.appendChild(c);
  const len = s.textContent.length;
  s.style.letterSpacing = ((len * 6 - s.getBoundingClientRect().height) / len).toFixed(3) + 'px';
}
// track each label to its set width
document.querySelectorAll('[data-w]').forEach(el => {
  const extra = (el.dataset.w - el.getBoundingClientRect().width) / el.textContent.length;
  el.style.letterSpacing = extra.toFixed(3) + 'px';
});
document.querySelectorAll('[data-s]').forEach(el => {
  el.style.transform = 'scaleX(' + (el.dataset.s / el.getBoundingClientRect().width).toFixed(4) + ')';
});
</script>
</body>
</html>
